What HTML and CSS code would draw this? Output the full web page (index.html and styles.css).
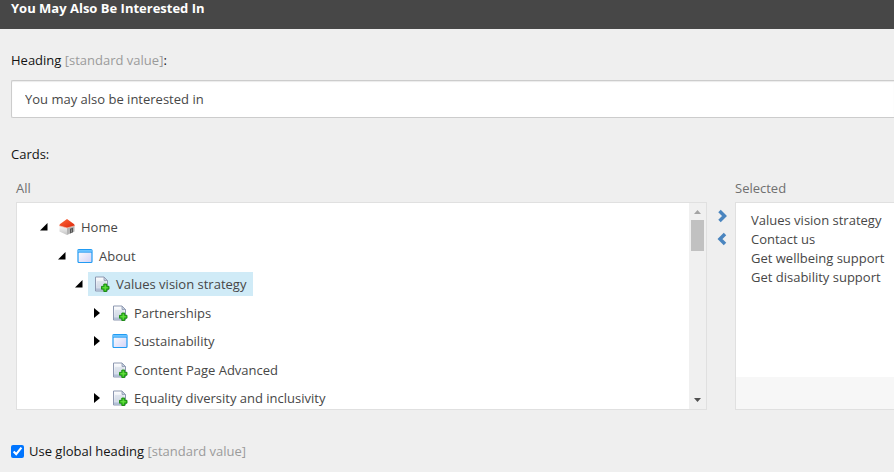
FILE: index.html
```html
<!DOCTYPE html>
<html lang="en">
<head>
    <meta charset="UTF-8">
    <title>You May Also Be Interested In</title>
    <link rel="stylesheet" href="styles.css">
</head>
<body>
    <!-- shared icons -->
    <svg class="sprite" aria-hidden="true">
        <defs>
            <linearGradient id="wall" x1="0" y1="0" x2="0" y2="1">
                <stop offset="0" stop-color="#ffffff"/>
                <stop offset="1" stop-color="#c4c4c4"/>
            </linearGradient>
            <linearGradient id="roof" x1="0" y1="0" x2="1" y2="1">
                <stop offset="0" stop-color="#ff6a3c"/>
                <stop offset="1" stop-color="#dc2408"/>
            </linearGradient>
            <linearGradient id="pane" x1="0" y1="0" x2="1" y2="1">
                <stop offset="0" stop-color="#ffffff"/>
                <stop offset="1" stop-color="#d3d3f6"/>
            </linearGradient>
            <linearGradient id="paper" x1="0" y1="0" x2="0" y2="1">
                <stop offset="0" stop-color="#ffffff"/>
                <stop offset="1" stop-color="#c9d3e4"/>
            </linearGradient>
        </defs>
        <symbol id="home" viewBox="0 0 16 16">
            <path d="M.5 6L8 8.500V16L.5 12.500z" fill="url(#wall)"/>
            <path d="M8 8.500L15.500 6v6.500L8 16z" fill="#b4b4b4"/>
            <path d="M11 9.800l3-1v4.400l-3 1.300z" fill="#555"/>
            <path d="M12 10.600l1-.4v3l-1 .4z" fill="#8c8c8c"/>
            <path d="M8 0L.8 5.200.3 6.800 8 9l7.700-2.200-.5-1.600z" fill="url(#roof)"/>
            <path d="M.3 6.800L8 9l7.700-2.200" fill="none" stroke="#f3c0b2" stroke-width=".7"/>
        </symbol>
        <symbol id="window" viewBox="0 0 16 16">
            <rect x="1" y="1.500" width="14" height="13" rx="1" fill="url(#pane)" stroke="#219bf3" stroke-width="1.200"/>
            <path d="M1.500 2h13v2h-13z" fill="#6cc4ff"/>
            <path d="M1 4.300h14" stroke="#219bf3" stroke-width=".8"/>
        </symbol>
        <symbol id="page" viewBox="0 0 16 16">
            <path d="M1.500 1h8.500l3.500 3.500v10.500h-12z" fill="url(#paper)" stroke="#8d98b0"/>
            <path d="M10 1v3.500h3.500z" fill="#c6d0df" stroke="#8d98b0" stroke-width=".8"/>
            <path d="M3 6h9M3 8h6M3 10h4" stroke="#d0d8e4"/>
            <path d="M2 12.500h6v2h-6z" fill="#b3c0d6"/>
            <path d="M9.800 8h2.900v2.300H15v2.900h-2.300v2.300H9.800v-2.300H7.500v-2.900h2.300z" fill="#35c41d" stroke="#14860c" stroke-width=".9"/>
            <path d="M11.250 9.200v5M8.700 11.750h5" stroke="#6ee048" stroke-width=".9"/>
        </symbol>
        <symbol id="open" viewBox="0 0 8 8"><path d="M7.500 0v7.500H0z"/></symbol>
        <symbol id="closed" viewBox="0 0 8 10"><path d="M1 0l6 5-6 5z"/></symbol>
    </svg>

    <header class="header">
        <h1 class="title">You May Also Be Interested In</h1>
    </header>

    <main class="editor">
        <label class="label" for="heading">Heading <span class="hint">[standard value]</span>:</label>
        <input class="text-input" id="heading" type="text" value="You may also be interested in">

        <h2 class="label cards-label">Cards:</h2>
        <div class="picker">
            <div class="column all">
                <h3 class="caption">All</h3>
                <div class="box tree-box">
                    <ul class="tree" role="tree" aria-label="All">
                        <li class="row level-1" role="treeitem" aria-level="1" aria-expanded="true">
                            <svg class="arrow"><use href="#open"/></svg>
                            <a class="node" href="#"><svg class="icon"><use href="#home"/></svg>Home</a>
                        </li>
                        <li class="row level-2" role="treeitem" aria-level="2" aria-expanded="true">
                            <svg class="arrow"><use href="#open"/></svg>
                            <a class="node" href="#"><svg class="icon"><use href="#window"/></svg>About</a>
                        </li>
                        <li class="row level-3" role="treeitem" aria-level="3" aria-expanded="true" aria-selected="true">
                            <svg class="arrow"><use href="#open"/></svg>
                            <a class="node active" href="#"><svg class="icon"><use href="#page"/></svg>Values vision strategy</a>
                        </li>
                        <li class="row level-4" role="treeitem" aria-level="4" aria-expanded="false">
                            <svg class="arrow closed"><use href="#closed"/></svg>
                            <a class="node" href="#"><svg class="icon"><use href="#page"/></svg>Partnerships</a>
                        </li>
                        <li class="row level-4" role="treeitem" aria-level="4" aria-expanded="false">
                            <svg class="arrow closed"><use href="#closed"/></svg>
                            <a class="node" href="#"><svg class="icon"><use href="#window"/></svg>Sustainability</a>
                        </li>
                        <li class="row level-4" role="treeitem" aria-level="4">
                            <svg class="arrow closed"></svg>
                            <a class="node" href="#"><svg class="icon"><use href="#page"/></svg>Content Page Advanced</a>
                        </li>
                        <li class="row level-4" role="treeitem" aria-level="4" aria-expanded="false">
                            <svg class="arrow closed"><use href="#closed"/></svg>
                            <a class="node" href="#"><svg class="icon"><use href="#page"/></svg>Equality diversity and inclusivity</a>
                        </li>
                    </ul>
                    <div class="scrollbar" aria-hidden="true">
                        <svg class="scroll-arrow" viewBox="0 0 17 17"><path d="M5 11h7L8.500 7z" fill="#a3a3a3"/></svg>
                        <div class="thumb"></div>
                        <svg class="scroll-arrow down" viewBox="0 0 17 17"><path d="M5 6h7l-3.500 4z" fill="#505050"/></svg>
                    </div>
                </div>
            </div>

            <div class="moves">
                <button class="move" type="button" aria-label="Add">
                    <svg viewBox="0 0 10 14"><path d="M2.500 2l5 5-5 5"/></svg>
                </button>
                <button class="move" type="button" aria-label="Remove">
                    <svg viewBox="0 0 10 14"><path d="M8 2L3 7l5 5"/></svg>
                </button>
            </div>

            <div class="column selected">
                <label class="caption" for="selected">Selected</label>
                <div class="box selected-box">
                    <select class="list" id="selected" multiple>
                        <option>Values vision strategy</option>
                        <option>Contact us</option>
                        <option>Get wellbeing support</option>
                        <option>Get disability support</option>
                    </select>
                    <div class="help"></div>
                </div>
            </div>
        </div>

        <div class="check">
            <input class="checkbox" id="global" type="checkbox" checked>
            <label for="global">Use global heading <span class="hint">[standard value]</span></label>
        </div>
    </main>
</body>
</html>
```
FILE: styles.css
```css
*{
    margin: 0;
    padding: 0;
    box-sizing: border-box;
}
body{
    font-family: "Open Sans", "Noto Sans", sans-serif;
    font-size: 13px;
    line-height: 18px;
    color: #131313;
    background: #efefef;
}
.sprite{
    position: absolute;
    width: 0;
    height: 0;
}
.header{
    height: 29px;
    padding-left: 11px;
    background: #474747;
}
.title{
    font-size: 13px;
    line-height: 16px;
    font-weight: bold;
    color: white;
}
.editor{
    padding: 22px 0 0 11px;
}
.label{
    display: block;
    font-size: 13px;
    font-weight: normal;
}
.hint{
    color: #9b9b9b;
}
.text-input{
    display: block;
    width: 100%;
    height: 38px;
    margin-top: 11px;
    padding: 0 13px;
    border: 1px solid #ccc;
    border-right: none;
    border-radius: 2px 0 0 2px;
    box-shadow: inset 0 1px 1px rgba(0, 0, 0, 0.08);
    background: white;
    font: inherit;
    color: #474747;
}
.cards-label{
    margin-top: 27px;
}

/* card picker */
.picker{
    display: flex;
    margin-top: 16px;
    padding-left: 5px;
}
.all{
    flex: 1;
}
.selected{
    width: 159px;
}
.caption{
    display: block;
    margin-bottom: 5px;
    font-size: 13px;
    font-weight: normal;
    color: #707070;
}
.box{
    display: flex;
    height: 208px;
    border: 1px solid #e0e0e0;
    background: white;
}
.tree{
    flex: 1;
    display: flex;
    flex-direction: column;
    justify-content: space-between;
    height: 195px;
    margin-top: 12px;
    list-style: none;
}
.row{
    display: flex;
    align-items: center;
    height: 24px;
}
.level-1{
    padding-left: 23px;
}
.level-2{
    padding-left: 41px;
}
.level-3{
    padding-left: 58px;
}
.level-4{
    padding-left: 76px;
}
.arrow{
    width: 8px;
    height: 8px;
    margin-right: 5px;
}
.closed{
    height: 10px;
}
.node{
    display: flex;
    align-items: center;
    gap: 6px;
    height: 24px;
    padding: 0 7px 0 6px;
    color: #474747;
    text-decoration: none;
}
.active{
    background: #d0ebf7;
}
.icon{
    width: 16px;
    height: 16px;
}
.scrollbar{
    display: flex;
    flex-direction: column;
    align-items: center;
    width: 17px;
    background: #f0f0f0;
}
.scroll-arrow{
    width: 17px;
    height: 17px;
}
.down{
    margin-top: auto;
}
.thumb{
    width: 13px;
    height: 31px;
    background: #c1c1c1;
}
.moves{
    display: flex;
    flex-direction: column;
    align-items: center;
    gap: 9px;
    width: 28px;
    padding: 30px 0 0 1px;
}
.move{
    width: 10px;
    height: 14px;
    border: none;
    background: none;
    cursor: pointer;
}
.move svg{
    display: block;
    width: 10px;
    height: 14px;
    fill: none;
    stroke: #4a85bf;
    stroke-width: 3.5;
}
.selected-box{
    flex-direction: column;
    border-right: none;
}
.list{
    flex: 1;
    width: 100%;
    padding: 8px 0 0 13px;
    border: none;
    outline: none;
    overflow: hidden;
    background: white;
    font: inherit;
    color: #474747;
}
.list option{
    padding: 0 0 1px 2px;
    min-height: 19px;
}
.help{
    height: 32px;
    background: #f7f7f7;
}

.check{
    display: flex;
    align-items: center;
    gap: 5px;
    margin-top: 32px;
}
.checkbox{
    width: 13px;
    height: 13px;
    accent-color: #0075ff;
}
```
